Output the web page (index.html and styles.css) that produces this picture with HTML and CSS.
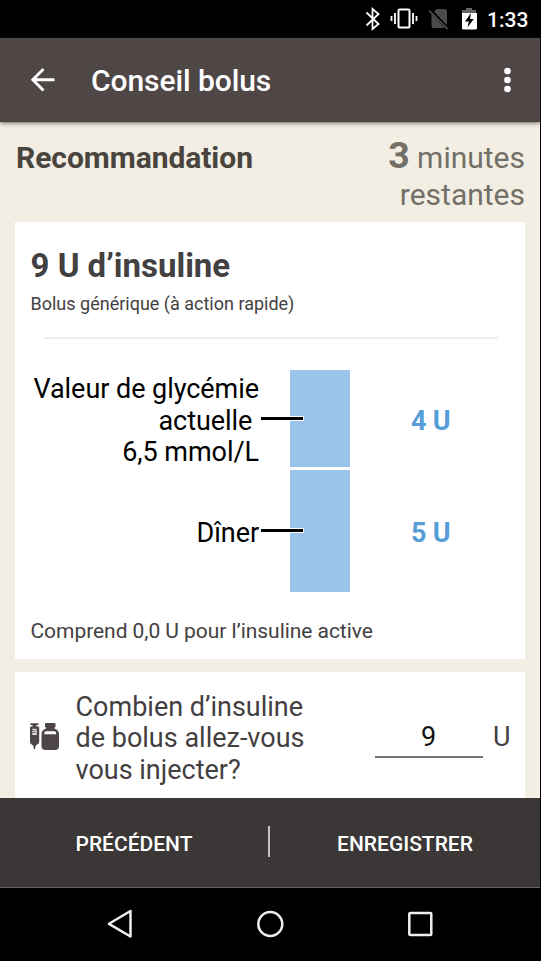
FILE: index.html
```html
<!DOCTYPE html>
<html lang="fr">
<head>
<meta charset="utf-8">
<title>Conseil bolus</title>
<link rel="stylesheet" href="styles.css">
</head>
<body>
<div class="screen">
  <header class="status">
    <svg class="status-icons" width="120" height="38" viewBox="360 0 120 38" fill="none">
      <path d="M366.500 12.500l12 11.500-6 5V9l6 5-12 11.500" stroke="#fff" stroke-width="1.800"/>
      <rect x="398.500" y="9.500" width="11" height="18" rx="1" stroke="#fff" stroke-width="2"/>
      <path d="M395 13v11M413 13v11M391.500 16v5M416.500 16v5" stroke="#fff" stroke-width="1.800"/>
      <path d="M431.500 14l5-5H445q2 0 2 2v17h-13.500q-2 0-2-2z" fill="#4b4b4b"/>
      <path d="M430 10l18 19" stroke="#000" stroke-width="3.500"/>
      <path d="M429 10.500l18.500 18.500" stroke="#555" stroke-width="1.600"/>
      <path d="M466 8h6v2h4v3.500h-14V10h4z" fill="#666"/>
      <path d="M462 13h15v15q0 1.500-1.500 1.500h-12q-1.500 0-1.500-1.500z" fill="#fff"/>
      <path d="M471 13l-6 8.500h3.800l-1.300 6 6.200-8.500h-3.700z" fill="#000"/>
    </svg>
    <span class="clock">1:33</span>
  </header>
  <nav class="appbar">
    <svg class="back" width="26" height="26" viewBox="0 0 26 26" fill="none" stroke="#fff" stroke-width="2.900"><path d="M24.500 12.800H3M13.500 2L2.800 12.800l10.700 10.700"/></svg>
    <h1>Conseil bolus</h1>
    <svg class="more" width="8" height="26" viewBox="0 0 8 26" fill="#fff"><circle cx="3.500" cy="4" r="3.300"/><circle cx="3.500" cy="13" r="3.300"/><circle cx="3.500" cy="22" r="3.300"/></svg>
  </nav>
  <main class="content">
    <section class="heading">
      <h2>Recommandation</h2>
      <p class="remaining"><b>3</b> minutes<br>restantes</p>
    </section>
    <section class="card dose">
      <h3>9 U d’insuline</h3>
      <p class="kind">Bolus générique (à action rapide)</p>
      <hr>
      <div class="chart">
        <div class="row first">
          <div class="label">Valeur de glycémie<br>actuelle&nbsp;<br>6,5 mmol/L</div>
          <div class="bar"><i class="leader"></i></div>
          <div class="value">4 U</div>
        </div>
        <div class="row second">
          <div class="label">Dîner</div>
          <div class="bar"><i class="leader"></i></div>
          <div class="value">5 U</div>
        </div>
      </div>
      <p class="active">Comprend 0,0 U pour l’insuline active</p>
    </section>
    <section class="card entry">
      <svg class="vial" width="30" height="28" viewBox="30 723 30 28" fill="#4d4546">
        <path d="M30.500 723.300h8v1.700h-2v1.500h1.700q1 0 1 1v14.500q0 1.800-2 2.500l-1.400 1-.9 4h-.8l-.9-4-1.400-1q-1.800-.7-1.800-2.500v-14.500q0-1 1-1h1.500V725h-2z"/>
        <path d="M32.300 728.800h4.400v6.200h-4.400z" fill="#ddd"/>
        <path d="M32.300 730.300h3.300v.8h-3.300zM32.300 732.300h3.300v.8h-3.300z"/>
        <path d="M46 723h8.500q1 0 1 1v2.500q0 1-1 1v1q4.500 1.500 4.500 5.500v12q0 4-4 4h-9.500q-4 0-4-4v-12q0-4 4.500-5.500v-1q-1 0-1-1V724q0-1 1-1z"/>
        <path d="M45.500 731.200H55q1 0 1.200 3H44.300q.2-3 1.200-3z" fill="#fff"/>
      </svg>
      <label for="units">Combien d’insuline<br>de bolus allez-vous<br>vous injecter?</label>
      <input id="units" value="9">
      <span class="unit">U</span>
    </section>
  </main>
  <footer class="actions">
    <button>PRÉCÉDENT</button>
    <i class="separator"></i>
    <button>ENREGISTRER</button>
  </footer>
  <nav class="system">
    <svg width="26" height="30" viewBox="0 0 26 30"><path d="M23.500 2v25.500L2 14.800z"/></svg>
    <svg width="28" height="30" viewBox="0 0 28 30"><circle cx="14.300" cy="15" r="12"/></svg>
    <svg width="26" height="30" viewBox="0 0 26 30"><rect x="2.300" y="4" width="22" height="22" rx="1"/></svg>
  </nav>
</div>
</body>
</html>
```
FILE: styles.css
```css
* { box-sizing: border-box; margin: 0; padding: 0; }
body {
  width: 541px;
  height: 961px;
  overflow: hidden;
  background: #000;
  font-family: Roboto, "Liberation Sans", sans-serif;
  color: #434041;
}
.screen {
  width: 540px;
  height: 961px;
  display: flex;
  flex-direction: column;
}
.status {
  height: 38px;
  flex: none;
  display: flex;
  justify-content: flex-end;
  align-items: center;
  padding-right: 12px;
  color: #fff;
}
.status-icons { flex: none; }
.clock {
  width: 41px;
  margin-left: 7px;
  font-size: 21px;
  font-weight: 500;
  line-height: 25px;
  margin-top: 2px;
  white-space: nowrap;
}
.appbar {
  height: 84px;
  flex: none;
  display: flex;
  align-items: center;
  padding: 0 28px 0 30px;
  background: #4f4646;
  color: #fff;
  box-shadow: 0 1px 4px rgba(60, 50, 40, .75);
  z-index: 1;
}
.appbar h1 {
  flex: 1;
  margin-left: 35px;
  font-size: 30px;
  font-weight: 500;
  line-height: 35px;
  letter-spacing: -.08px;
  padding-top: 1px;
}
.content {
  height: 676px;
  flex: none;
  overflow: hidden;
  background: #f2eee4;
  padding: 0 15px;
}
.heading {
  height: 100px;
  display: flex;
  justify-content: space-between;
}
.heading h2 {
  margin: 18px 0 0 1px;
  font-size: 30px;
  line-height: 36px;
  font-weight: 700;
  letter-spacing: -.05px;
  color: #49443e;
}
.remaining {
  text-align: right;
  margin-top: 15px;
  font-size: 30px;
  line-height: 37px;
  color: #737067;
}
.remaining b { font-size: 37.5px; }
.card { background: #fff; }
.dose {
  height: 437px;
  padding: 24px 27px 0 16px;
}
.dose h3 {
  font-size: 33px;
  line-height: 39px;
  font-weight: 700;
  margin-left: -.5px;
}
.kind {
  margin: 8px 0 0 -.5px;
  font-size: 18px;
  line-height: 21px;
}
hr {
  height: 2px;
  margin: 23px 0 0 12px;
  border: 0;
  background: #f1eee5;
}
.chart {
  margin-top: 31px;
  display: flex;
  flex-direction: column;
  gap: 3px;
}
.row {
  display: grid;
  grid-template-columns: 228px 60px 39px;
  grid-template-rows: 100%;
  column-gap: 31px;
}
.first { height: 97px; }
.second { height: 122px; }
.label, .value { font-size: 27px; line-height: 31.6px; }
.label {
  padding-top: 4px;
  text-align: right;
  letter-spacing: -.05px;
  color: #000;
  white-space: nowrap;
}
.bar { position: relative; background: #9ac4e9; }
.leader {
  position: absolute;
  left: -29px;
  top: 46px;
  width: 43px;
  height: 5px;
  border: 1px solid #fff;
  border-left: 0;
  background: #000;
}
.second .leader { top: 58px; }
.value {
  margin-left: 30px;
  padding-top: 36px;
  font-weight: 700;
  letter-spacing: -.2px;
  color: #579dd8;
  white-space: nowrap;
}
.second .label, .second .value { padding-top: 48px; }
.active {
  margin: 27px 0 0 -.5px;
  font-size: 21px;
  line-height: 25px;
  letter-spacing: -.05px;
}
.entry {
  height: 146px;
  margin-top: 13px;
  padding: 19px 15px 0;
  display: grid;
  grid-template-columns: 30px 314.5px 108px 1fr;
  align-items: start;
  font-size: 27px;
  line-height: 31.6px;
}
.vial { margin-top: 32px; }
.entry label { padding: .6px 0 0 15.500px; }
.entry input {
  width: 108px;
  height: 37px;
  margin-top: 30px;
  border: 0;
  border-bottom: 2px solid #737373;
  background: none;
  font: inherit;
  text-align: center;
  color: #111;
  padding-bottom: 4px;
}
.unit { padding: 31px 0 0 10.500px; }
.actions {
  height: 90px;
  flex: none;
  display: grid;
  grid-template-columns: 268px 2px 270px;
  align-items: center;
  background: #3b3736;
  border-bottom: 1px solid #686564;
}
.actions button {
  border: 0;
  background: none;
  color: #fff;
  font: 500 21px/25px Roboto, sans-serif;
  padding-top: 4px;
}
.separator { width: 2px; height: 31px; margin-bottom: 3px; background: #c4c2c1; }
.system {
  flex: 1;
  display: flex;
  justify-content: space-between;
  padding: 21px 107px 0;
}
.system svg { fill: none; stroke: #eee; stroke-width: 2.5; stroke-linejoin: round; }
```
